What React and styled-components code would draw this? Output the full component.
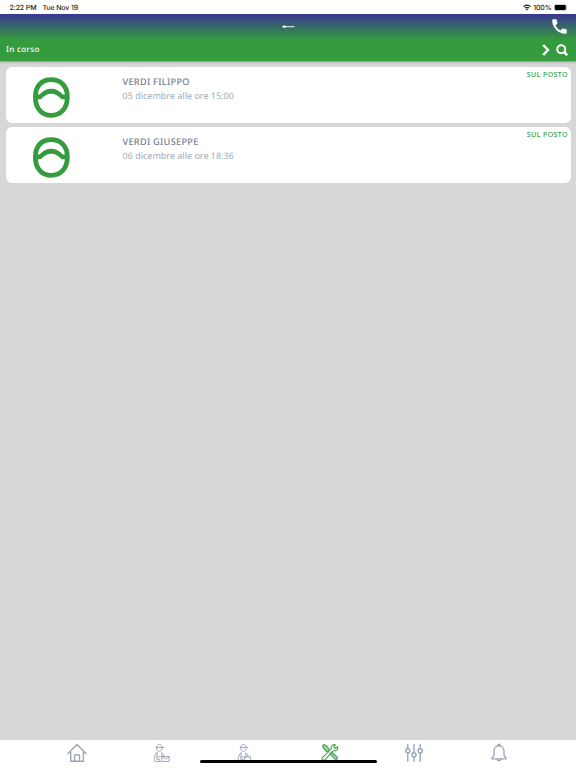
import React from "react";
import styled, { createGlobalStyle } from "styled-components";

const GREEN = "#359b3e";

const GlobalStyle = createGlobalStyle`
  * { box-sizing: border-box; }
  body { margin: 0; background: #d7d7d7; font-family: "Noto Sans", sans-serif; text-rendering: geometricPrecision; }
  svg { display: block; flex: none; }
`;

const Screen = styled.div`
  position: relative;
  display: flex;
  flex-direction: column;
  width: 576px;
  height: 768px;
  overflow: hidden;
  background: #d7d7d7;
`;

const StatusBar = styled.div`
  display: flex;
  flex: none;
  justify-content: space-between;
  height: 14px;
  padding: 0 8.5px 0 9.5px;
  background: #fff;
  color: #1c1c1c;
  font: 500 7px/14px Inter, sans-serif;
`;

const StatusGroup = styled.div`
  display: flex;
  align-items: center;
  gap: ${(p) => p.$gap}px;
  padding-top: 1px;
  letter-spacing: -0.13px;
`;

const Header = styled.header`
  flex: none;
  height: 47px;
  background: linear-gradient(#383b8d 0, #383b8d 1px, ${GREEN} 26px);
  box-shadow: 0 1px 2px rgba(0, 0, 0, 0.35);
  color: #fff;
`;

const BrandRow = styled.div`
  display: grid;
  grid-template-columns: 1fr auto 1fr;
  align-items: center;
  height: 25px;
`;

const Brand = styled.div`
  grid-column: 2;
`;

const CallButton = styled.div`
  justify-self: end;
  padding-right: 9px;
`;

const TitleRow = styled.div`
  display: flex;
  align-items: center;
  justify-content: space-between;
  height: 22px;
  padding: 0 8.5px 0 6px;
`;

const Title = styled.h1`
  margin: 0;
  font-size: 8px;
  line-height: 12px;
  font-weight: 500;
  letter-spacing: 0.37px;
`;

const Actions = styled.div`
  display: flex;
  align-items: center;
  gap: 5.5px;
`;

const List = styled.main`
  display: flex;
  flex: 1;
  flex-direction: column;
  gap: 4px;
  padding: 6px 5.5px;
`;

const Card = styled.article`
  display: grid;
  grid-template-columns: 117px 1fr auto;
  height: 56px;
  padding-right: 2.5px;
  border-radius: 6px;
  background: #fff;
`;

const Emblem = styled.div`
  padding: 10px 0 0 26.5px;
`;

const Details = styled.div`
  padding-top: 8px;
`;

const Name = styled.h2`
  margin: 0;
  color: #748094;
  font-size: 9.2px;
  line-height: 14px;
  font-weight: 500;
  letter-spacing: 0.28px;
`;

const When = styled.p`
  margin: 0;
  color: #a2aab7;
  font-size: 9px;
  line-height: 13px;
`;

const Status = styled.span`
  padding-top: 3px;
  color: ${GREEN};
  font-size: 7px;
  line-height: 12px;
  font-weight: 500;
  letter-spacing: 0.42px;
`;

const TabBar = styled.nav`
  display: grid;
  flex: none;
  grid-template-columns: repeat(6, 84.3px);
  justify-content: center;
  height: 28px;
  padding-top: 3px;
  background: #fff;
`;

const Tab = styled.div`
  display: flex;
  justify-content: center;
  color: ${(p) => (p.$active ? "#4aa653" : "#9aa5b5")};
`;

const HomeIndicator = styled.div`
  position: absolute;
  left: 199.5px;
  bottom: 4.7px;
  width: 177px;
  height: 3.3px;
  border-radius: 2px;
  background: #000;
`;

const line = { fill: "none", stroke: "currentColor", strokeLinejoin: "round", strokeLinecap: "round" };

const Wifi = () => (
  <svg width="8" height="7" viewBox="0 0 8 7" fill="none" stroke="#111" strokeWidth="1.15">
    <path d="M.5 2.6Q4-.5 7.5 2.6M1.9 4.1Q4 2.4 6.1 4.1" />
    <path d="M2.8 5L4 6.4 5.2 5Q4 4.2 2.8 5Z" fill="#111" stroke="none" />
  </svg>
);

const Battery = () => (
  <svg width="14" height="7" viewBox="0 0 14 7">
    <rect x=".3" y=".3" width="12" height="6.2" rx="1.7" fill="none" stroke="#999" strokeWidth=".5" />
    <rect x=".8" y=".9" width="11" height="5" rx="1.2" fill="#000" />
    <path d="M12.8 2.4q1 .9 0 2z" fill="#999" />
  </svg>
);

const BrandMark = () => (
  <svg width="13" height="4" viewBox="0 0 13 4">
    <ellipse cx="2.4" cy="1.6" rx="1.7" ry="1.2" fill="#fff" />
    <path d="M.3 1.6h4M4.3 1.7h8.2" stroke="#fff" strokeWidth="1.3" opacity=".75" />
  </svg>
);

const Phone = () => (
  <svg width="15" height="15" viewBox="2.5 2.5 19 19" fill="#fff">
    <path d="M6.62 10.79c1.44 2.83 3.76 5.14 6.59 6.59l2.2-2.2c.27-.27.67-.36 1.02-.24 1.12.37 2.33.57 3.57.57.55 0 1 .45 1 1V20c0 .55-.45 1-1 1-9.39 0-17-7.61-17-17 0-.55.45-1 1-1h3.5c.55 0 1 .45 1 1 0 1.25.2 2.45.57 3.57.11.35.03.74-.25 1.02z" stroke="#fff" strokeWidth=".5" />
  </svg>
);

const Chevron = () => (
  <svg width="8" height="12" viewBox="0 0 8 12" fill="none" stroke="#fff" strokeWidth="2.5">
    <path d="M1.2 1L6 6l-4.8 5" />
  </svg>
);

const Search = () => (
  <svg width="12" height="12" viewBox="0 0 12 12" fill="none" stroke="#fff" strokeWidth="2">
    <circle cx="5.2" cy="5.2" r="4" />
    <path d="M8 8l3.2 3.2" strokeWidth="2.5" />
  </svg>
);

const LiftEmblem = () => (
  <svg width="38" height="42" viewBox="0 0 38 42">
    <path
      d="M19.2 2.7C28.2 2.7 35.3 8.5 35.3 20C35.3 32 28.2 38.4 19.2 38.4S3.4 32 3.4 20C3.4 8.5 10.2 2.7 19.2 2.7Z"
      fill="none"
      stroke={GREEN}
      strokeWidth="4.8"
    />
    <path d="M4 17.6H7.5Q12.5 11.8 19.2 11.8T30.8 17.6H34V22.3H29.5Q25 16.7 19.2 16.7T8.8 22.3H4Z" fill={GREEN} />
  </svg>
);

const House = () => (
  <svg width="20" height="20" viewBox="0 0 20 20" {...line} strokeWidth="1.4">
    <path d="M1 10.6L10 1.5l9 9.1M3.7 9v9.3h3.8V12.8q0-1 1-1h3q1 0 1 1v5.5h3.9V9M7.5 18.3h5" />
  </svg>
);

const Worker = ({ bag }) => (
  <svg width="18" height="20" viewBox="0 0 18 20" {...line} strokeWidth=".95">
    <path d="M3.5 4.2C3.8.4 9 .4 9.2 4.2M3 4.4h8M3.6 4.5c0 5.3 5.6 5.3 5.6 0" />
    <path d="M4 9.7l-1.3 1.5Q1 14.3 1.2 17.2q0 1.3 1.3 1.3h4.7M4 9.7v4.2h4.8V9.7l1.5 1.5.4 1.4M3.8 14v2.3h3v2.2" />
    {bag ? (
      <path d="M8.2 14h5.4v4.5H8.2zM9.5 14c0-2 2.9-2 2.9 0" />
    ) : (
      <path d="M9.3 13.5h6.9v5H9.3zM9.3 13.7l3.5 2.5 3.4-2.5" />
    )}
  </svg>
);

const Tools = () => (
  <svg width="18" height="18" viewBox="0 0 18 18" {...line} strokeWidth="1.1">
    <path d="M1.6 3L3 1.5Q7.3 3 8.3 7.7L7 9Q3 7.3 1.6 3ZM9.2 10.5l1.5-1.5 5.3 5c1.5 1.5-.8 3.7-2.2 2.2l-4.5-5z" fill="currentColor" fillOpacity=".5" />
    <path d="M14.3 1.7c-2.7-.5-4.7 1.6-3.9 4L1.7 14.3c-1.7 1.8.7 4 2.3 2.3l8.6-9c2.7.9 4.9-1.4 4-4l-2.3 1.9-1.6-.9z" />
  </svg>
);

const Sliders = () => (
  <svg width="18" height="20" viewBox="0 0 18 20" {...line} strokeWidth="1.4">
    <path d="M2.8 1.5v4.2M2.8 10v8.3M9 1.5V9.5M9 14v4.3M15.2 1.5v4.2M15.2 10v8.3" />
    <circle cx="2.8" cy="7.8" r="2.1" />
    <circle cx="9" cy="11.8" r="2.1" />
    <circle cx="15.2" cy="7.8" r="2.1" />
  </svg>
);

const Bell = () => (
  <svg width="16" height="20" viewBox="0 0 16 20" {...line} strokeWidth="1.3">
    <path d="M6.8 2.4c0-1.7 2.4-1.7 2.4 0M3 12V8.2c0-7 10-7 10 0V12q.3 1.8 2 2.9v1H1v-1Q2.7 13.8 3 12ZM6 16c.1 2.3 3.9 2.3 4 0" />
  </svg>
);

const jobs = [
  { name: "VERDI FILIPPO", when: "05 dicembre alle ore 15:00" },
  { name: "VERDI GIUSEPPE", when: "06 dicembre alle ore 18:36" },
];

export default function App() {
  return (
    <>
      <GlobalStyle />
      <Screen>
        <StatusBar>
          <StatusGroup $gap={6}>
            <span>2:22 PM</span>
            <span>Tue Nov 19</span>
          </StatusGroup>
          <StatusGroup $gap={2}>
            <Wifi />
            <span>100%</span>
            <Battery />
          </StatusGroup>
        </StatusBar>
        <Header>
          <BrandRow>
            <Brand><BrandMark /></Brand>
            <CallButton><Phone /></CallButton>
          </BrandRow>
          <TitleRow>
            <Title>In corso</Title>
            <Actions>
              <Chevron />
              <Search />
            </Actions>
          </TitleRow>
        </Header>
        <List>
          {jobs.map((job) => (
            <Card key={job.name}>
              <Emblem><LiftEmblem /></Emblem>
              <Details>
                <Name>{job.name}</Name>
                <When>{job.when}</When>
              </Details>
              <Status>SUL POSTO</Status>
            </Card>
          ))}
        </List>
        <TabBar>
          <Tab><House /></Tab>
          <Tab><Worker /></Tab>
          <Tab><Worker bag /></Tab>
          <Tab $active><Tools /></Tab>
          <Tab><Sliders /></Tab>
          <Tab><Bell /></Tab>
        </TabBar>
        <HomeIndicator />
      </Screen>
    </>
  );
}
